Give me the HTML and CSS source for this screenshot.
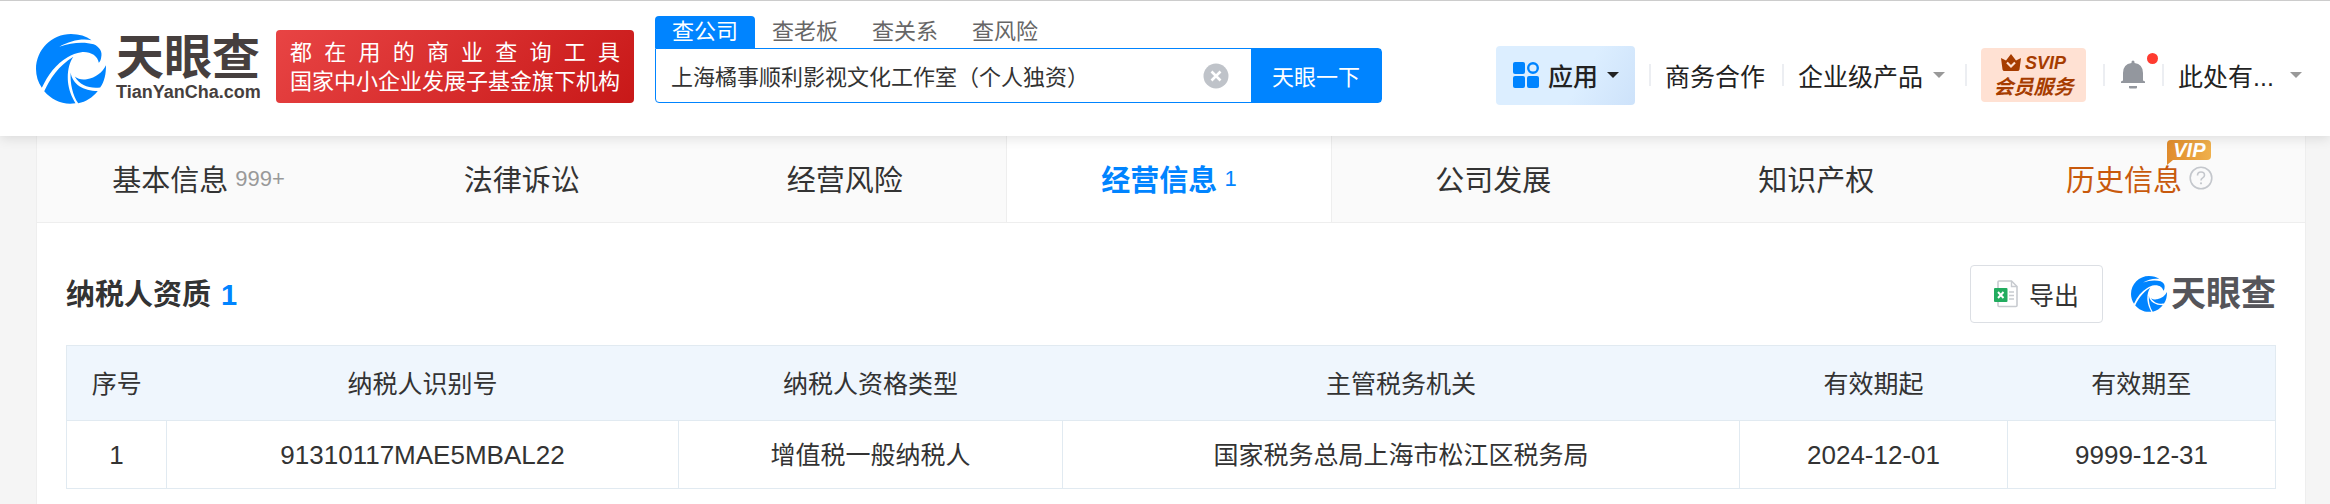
FILE: index.html
```html
<!DOCTYPE html>
<html lang="zh-CN">
<head>
    <meta charset="UTF-8">
    <meta name="viewport" content="width=device-width, initial-scale=1.0">
    <title>纳税人资质 - 天眼查</title>
    <link rel="stylesheet" href="styles.css">
</head>
<body>

    <!-- shared logo mark -->
    <svg class="defs" width="0" height="0" aria-hidden="true">
        <symbol id="mark" viewBox="0 0 204 204">
            <path fill="#0084ff" d="M102 0C126 0 146 6 162 18C132 12 98 20 68 37C104 24 142 22 168 30C186 38 194 52 190 68C189 76 187 80 183 84C180 62 156 50 132 53C118 55 104 60 92 68C58 88 36 118 17 157C6 141 0 122 0 102C0 46 46 0 102 0Z"/>
            <path fill="#0084ff" d="M24 167C40 130 66 92 109 66C96 84 91 110 93 138C95 162 104 184 115 202C78 208 46 192 24 167Z"/>
            <path fill="#0084ff" d="M101 112C106 146 138 166 180 166C164 186 146 197 123 202C107 178 99 144 101 112Z"/>
            <path fill="#0084ff" d="M113 124C122 132 134 134 148 132C174 127 194 112 204 91C204 116 200 138 187 156C156 160 128 150 113 124Z"/>
        </symbol>
    </svg>

    <header class="header">
        <a class="logo" href="#">
            <svg class="logo-mark" aria-hidden="true"><use href="#mark"/></svg>
            <span class="logo-text">
                <span class="logo-name">天眼查</span>
                <span class="logo-domain">TianYanCha.com</span>
            </span>
        </a>
        <div class="slogan">
            <div class="slogan-wide">都 在 用 的 商 业 查 询 工 具</div>
            <div>国家中小企业发展子基金旗下机构</div>
        </div>

        <form class="search">
            <div class="search-tabs">
                <button type="button" class="active">查公司</button>
                <button type="button">查老板</button>
                <button type="button">查关系</button>
                <button type="button">查风险</button>
            </div>
            <div class="search-row">
                <input type="text" aria-label="搜索公司" value="上海橘事顺利影视文化工作室（个人独资）">
                <button type="reset" class="clear" aria-label="清除">
                    <svg width="26" height="26" viewBox="0 0 26 26">
                        <circle cx="13" cy="13" r="12.5" fill="#bfc3c9"/>
                        <path d="M8.5 8.5l9 9M17.5 8.5l-9 9" stroke="#fff" stroke-width="2.6"/>
                    </svg>
                </button>
                <button type="submit" class="submit">天眼一下</button>
            </div>
        </form>

        <nav class="nav">
            <button type="button" class="apps">
                <svg width="26" height="26" viewBox="0 0 26 26" aria-hidden="true">
                    <rect x="0" y="0" width="12" height="12" rx="2" fill="#0084ff"/>
                    <rect x="0" y="14" width="12" height="12" rx="2" fill="#0084ff"/>
                    <rect x="14" y="14" width="12" height="12" rx="2" fill="#0084ff"/>
                    <circle cx="20" cy="6" r="4.8" fill="none" stroke="#0084ff" stroke-width="2.4"/>
                </svg>
                应用
                <i class="caret"></i>
            </button>
            <a class="nav-item" href="#">商务合作</a>
            <button type="button" class="nav-item products">企业级产品 <i class="caret"></i></button>
            <div class="nav-item">
                <a class="svip" href="#">
                    <span class="svip-top">
                        <svg width="20" height="18" viewBox="0 0 20 18" aria-hidden="true">
                            <path fill="#a63c00" d="M0 4l5 2.5L10 0l5 6.500L20 4l-1.500 11.500q-.3 1.500-2 1.500h-13q-1.700 0-2-1.500z"/>
                            <path fill="none" stroke="#ffe1d3" stroke-width="2.200" d="M6 8.500l4 4 4-4"/>
                        </svg>
                        <b>SVIP</b>
                    </span>
                    <b class="svip-name">会员服务</b>
                </a>
            </div>
            <button type="button" class="nav-item" aria-label="消息">
                <span class="bell">
                    <svg width="24" height="30" viewBox="0 0 24 30" aria-hidden="true">
                        <path fill="#93979e" d="M10.500 2q0-1.500 1.500-1.500T13.500 2v1q8.500 1.200 8.500 10v7.500l2 1V23H0v-1.500l2-1V13Q2 4.200 10.500 3zM8 26h8v1.500q0 1-1 1H9q-1 0-1-1z"/>
                    </svg>
                    <span class="dot"></span>
                </span>
            </button>
            <button type="button" class="nav-item user"><span>此处有...</span> <i class="caret"></i></button>
        </nav>
    </header>

    <main class="page">
        <nav class="tabs">
            <a href="#">基本信息 <small>999+</small></a>
            <a href="#">法律诉讼</a>
            <a href="#">经营风险</a>
            <a href="#" class="active">经营信息 <small>1</small></a>
            <a href="#">公司发展</a>
            <a href="#">知识产权</a>
            <a href="#" class="history">
                历史信息
                <svg class="help" width="24" height="24" viewBox="0 0 24 24" aria-hidden="true">
                    <circle cx="12" cy="12" r="10.800" fill="none" stroke="#c4c7cc" stroke-width="1.600"/>
                    <path d="M8.500 9.500q0-3.500 3.500-3.500t3.500 3.200q0 1.600-1.800 2.700T12 14.500" fill="none" stroke="#c4c7cc" stroke-width="1.600"/>
                    <circle cx="12" cy="17.300" r="1.100" fill="#c4c7cc"/>
                </svg>
                <b class="vip">VIP</b>
            </a>
        </nav>

        <section class="section">
            <div class="section-head">
                <h2>纳税人资质 <span>1</span></h2>
                <button type="button" class="export">
                    <svg width="24" height="28" viewBox="0 0 24 28" aria-hidden="true">
                        <path d="M4 8V2q0-1 1-1h12.500L23 6.500V25.500q0 1-1 1H5q-1 0-1-1V22" fill="#fff" stroke="#c8cbd0" stroke-width="1.600"/>
                        <path d="M17.500 1v5.500H23M15 12h5M15 15.500h5M15 19h5" fill="none" stroke="#c8cbd0" stroke-width="1.400"/>
                        <rect x="0" y="8" width="13.500" height="14" rx="1" fill="#22ac5f"/>
                        <path d="M4 12l5.500 6M9.500 12L4 18" stroke="#fff" stroke-width="1.900"/>
                    </svg>
                    导出
                </button>
                <div class="brand">
                    <svg class="brand-mark" aria-hidden="true"><use href="#mark"/></svg>
                    <span>天眼查</span>
                </div>
            </div>

            <table>
                <colgroup>
                    <col class="col-index">
                    <col class="col-code">
                    <col class="col-type">
                    <col>
                    <col class="col-date">
                    <col class="col-date">
                </colgroup>
                <thead>
                    <tr>
                        <th>序号</th>
                        <th>纳税人识别号</th>
                        <th>纳税人资格类型</th>
                        <th>主管税务机关</th>
                        <th>有效期起</th>
                        <th>有效期至</th>
                    </tr>
                </thead>
                <tbody>
                    <tr>
                        <td class="num">1</td>
                        <td class="num">91310117MAE5MBAL22</td>
                        <td>增值税一般纳税人</td>
                        <td>国家税务总局上海市松江区税务局</td>
                        <td class="num">2024-12-01</td>
                        <td class="num">9999-12-31</td>
                    </tr>
                </tbody>
            </table>
        </section>
    </main>

</body>
</html>
```
FILE: styles.css
```css
* {
    box-sizing: border-box;
}

body {
    margin: 0;
    background-color: #f5f5f5;
    color: #333;
    font-family: "Liberation Sans", "Noto Sans CJK SC", sans-serif;
    font-size: 25px;
}

a {
    color: inherit;
    text-decoration: none;
}

button,
input {
    margin: 0;
    padding: 0;
    border: none;
    background: none;
    color: inherit;
    font: inherit;
}

button {
    cursor: pointer;
}

.defs {
    position: absolute;
}

/* header */
.header {
    position: relative;
    z-index: 1;
    display: flex;
    align-items: flex-start;
    height: 136px;
    padding: 0 28px 0 36px;
    border-top: 1px solid #ccc;
    background-color: #fff;
    box-shadow: 0 2px 12px rgba(0, 0, 0, 0.12);
    white-space: nowrap;
}

.logo {
    display: flex;
    gap: 10px;
    width: 240px;
    padding-top: 33px;
    color: #463f3e;
}

.logo-mark {
    width: 70px;
    height: 70px;
}

.logo-text {
    display: flex;
    flex-direction: column;
}

.logo-name {
    font-size: 48px;
    font-weight: 700;
    line-height: 48px;
}

.logo-domain {
    font-size: 18px;
    font-weight: 700;
    line-height: 20px;
}

.slogan {
    margin-top: 29px;
    padding: 8px 14px 7px;
    border-radius: 4px;
    background: linear-gradient(135deg, #e84444, #c81818);
    color: #fff;
    font-size: 22px;
    line-height: 29px;
}

.slogan-wide {
    text-align-last: justify;
}

.search {
    width: 727px;
    margin: 15px 0 0 21px;
    font-size: 22px;
}

.search-tabs {
    display: flex;
}

.search-tabs button {
    width: 100px;
    height: 32px;
    line-height: 32px;
    color: #666;
}

.search-tabs .active {
    border-radius: 4px 4px 0 0;
    background-color: #0084ff;
    color: #fff;
}

.search-row {
    display: flex;
    align-items: center;
    height: 55px;
    border: 1px solid #0084ff;
    border-radius: 0 4px 4px 4px;
}

.search-row input {
    flex: 1;
    min-width: 0;
    padding: 0 0 2px 15px;
    outline: none;
}

.clear {
    display: flex;
    margin-right: 22px;
}

.submit {
    width: 130px;
    align-self: stretch;
    padding-bottom: 2px;
    background-color: #0084ff;
    color: #fff;
}

.nav {
    display: flex;
    align-items: center;
    height: 60px;
    margin: 44px 0 0 auto;
    color: #222;
}

.nav-item {
    display: flex;
    align-items: center;
    gap: 10px;
    padding-right: 17px;
}

.nav-item::before {
    content: "";
    width: 2px;
    height: 22px;
    margin-right: 4px;
    background-color: #eceef2;
}

.nav .products {
    padding-right: 20px;
}

.nav .user {
    padding-right: 0;
}

.user span {
    width: 102px;
    text-align: left;
}

.caret {
    border: 6px solid transparent;
    border-top-color: #999;
    border-bottom: none;
}

.apps {
    display: flex;
    align-items: center;
    gap: 9px;
    height: 59px;
    margin-right: 14px;
    padding: 0 16px 0 17px;
    border-radius: 4px;
    background: linear-gradient(120deg, #dceeff 60%, #cde2fa);
    font-weight: 500;
}

.apps .caret {
    border-top-color: #222;
}

.svip {
    display: flex;
    flex-direction: column;
    align-items: center;
    width: 105px;
    height: 54px;
    padding-top: 5px;
    border-radius: 4px;
    background-color: #ffe1d3;
    color: #a63c00;
    font-style: italic;
}

.svip-top {
    display: flex;
    align-items: center;
    gap: 4px;
    font-size: 18px;
    line-height: 20px;
}

.svip-name {
    font-size: 20px;
    line-height: 28px;
}

.bell {
    position: relative;
    display: flex;
    margin-left: 2px;
}

.dot {
    position: absolute;
    top: -7px;
    right: -13px;
    width: 11px;
    height: 11px;
    border-radius: 50%;
    background-color: #ff3b30;
}

/* company page */
.page {
    min-height: 368px;
    margin: 0 24px 0 36px;
    border-right: 1px solid #eee;
    border-left: 1px solid #eee;
    background-color: #fff;
}

.tabs {
    display: flex;
    padding-right: 4px;
    border-bottom: 1px solid #eee;
    background-color: #fafafa;
    font-size: 29px;
}

.tabs a {
    position: relative;
    display: flex;
    flex: 1;
    align-items: center;
    justify-content: center;
    gap: 7px;
    height: 86px;
    padding-bottom: 3px;
}

.tabs small {
    padding-top: 3px;
    color: #999;
    font-size: 22px;
}

.tabs .active {
    border-right: 1px solid #eee;
    border-left: 1px solid #eee;
    background-color: #fff;
    color: #0084ff;
    font-weight: 700;
}

.tabs .active small {
    color: #0084ff;
    font-weight: 400;
}

.tabs .history {
    color: #c8590c;
}

.vip {
    position: absolute;
    top: 4px;
    left: calc(50% + 28px);
    width: 44px;
    height: 20px;
    border-radius: 4px 4px 4px 0;
    background: linear-gradient(90deg, #e08b2c, #efb04c);
    color: #fff;
    font-size: 20px;
    font-style: italic;
    line-height: 20px;
    text-align: center;
}

.vip::after {
    content: "";
    position: absolute;
    top: 100%;
    left: 0;
    border-top: 5px solid #e08b2c;
    border-right: 6px solid transparent;
}

.section {
    padding: 42px 29px 16px;
}

.section-head {
    display: flex;
    align-items: center;
    margin-bottom: 22px;
}

h2 {
    margin: 0 auto 0 0;
    padding-top: 2px;
    font-size: 29px;
    line-height: 40px;
}

h2 span {
    margin-left: 2px;
    color: #0084ff;
}

.export {
    display: flex;
    align-items: center;
    gap: 11px;
    height: 58px;
    padding: 0 23px;
    border: 1px solid #dcdfe4;
    border-radius: 4px;
}

.brand {
    display: flex;
    align-items: center;
    gap: 4px;
    margin-left: 28px;
    color: #55555a;
    font-size: 35px;
    font-weight: 700;
    line-height: 36px;
}

.brand-mark {
    width: 36px;
    height: 36px;
}

table {
    width: 100%;
    border-collapse: collapse;
    table-layout: fixed;
    text-align: center;
}

th,
td {
    padding: 0 0 3px;
    border: 1px solid #e1eaf1;
}

th {
    height: 75px;
    border-right: none;
    border-left: none;
    background-color: #eff6fd;
    font-weight: 400;
}

thead tr {
    border: 1px solid #e1eaf1;
}

td {
    height: 68px;
}

.num {
    padding: 2px 0 0;
    font-size: 26px;
}

.col-index {
    width: 100px;
}

.col-code {
    width: 512px;
}

.col-type {
    width: 384px;
}

.col-date {
    width: 268px;
}
```
